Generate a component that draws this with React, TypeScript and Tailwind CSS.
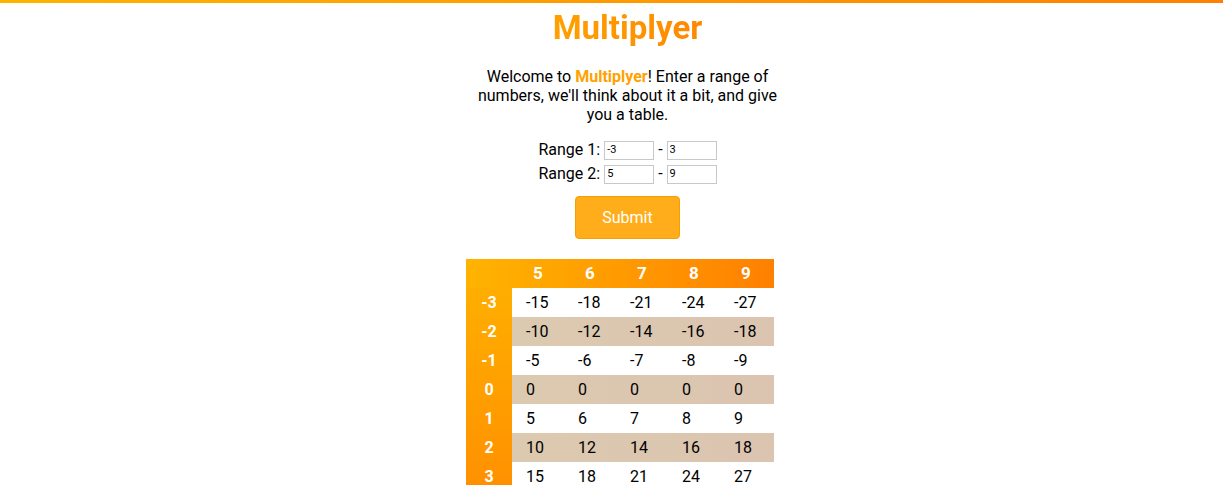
import { useState } from 'react';

const ROWS = [-3, -2, -1, 0, 1, 2, 3];
const COLS = [5, 6, 7, 8, 9];

function RangeRow({
  label,
  value,
  onChange,
}: {
  label: string;
  value: { from: string; to: string };
  onChange: (v: { from: string; to: string }) => void;
}) {
  return (
    <div className="flex items-center gap-1">
      <span>{label}</span>
      <input
        value={value.from}
        onChange={(e) => onChange({ ...value, from: e.target.value })}
        className="w-[50px] h-[19px] border border-[#c8c8c8] px-[2px] text-[11px] outline-none"
      />
      <span>-</span>
      <input
        value={value.to}
        onChange={(e) => onChange({ ...value, to: e.target.value })}
        className="w-[50px] h-[19px] border border-[#c8c8c8] px-[2px] text-[11px] outline-none"
      />
    </div>
  );
}

export default function App() {
  const [r1, setR1] = useState({ from: '-3', to: '3' });
  const [r2, setR2] = useState({ from: '5', to: '9' });

  return (
    <div className="min-h-screen bg-white text-black font-['Roboto',sans-serif]">
      <div className="h-[3px] bg-gradient-to-r from-[#ffb300] to-[#ff8000]" />

      <div className="flex flex-col items-center pl-[32px]">
        <h1 className="mt-[5px] text-[33px] leading-[40px] font-bold bg-gradient-to-r from-[#ffa000] to-[#ff8800] bg-clip-text text-transparent">
          Multiplyer
        </h1>

        <p className="mt-[19px] w-[310px] text-center text-base leading-[19px]">
          Welcome to <span className="font-bold text-[#ffa200]">Multiplyer</span>! Enter a range of numbers, we'll think about it a bit, and give you a table.
        </p>

        {/* Range inputs */}
        <div className="mt-[14px] flex flex-col items-center text-base leading-[24px]">
          <RangeRow label="Range 1:" value={r1} onChange={setR1} />
          <RangeRow label="Range 2:" value={r2} onChange={setR2} />
        </div>

        <button className="mt-[10px] w-[105px] h-[43px] rounded-[4px] bg-[#ffad1a] border border-[#f5a000] text-white text-base">
          Submit
        </button>

        {/* Table */}
        <div className="mt-[20px] mr-[15px] w-[308px]">
          <div className="flex h-[29px] items-center text-white font-bold text-[17px] bg-gradient-to-r from-[#ffb300] to-[#ff8000]">
            <div className="w-[46px]" />
            {COLS.map((c) => (
              <div key={c} className="w-[52px] text-center">{c}</div>
            ))}
          </div>
          <div className="flex">
            <div className="w-[46px] flex flex-col bg-gradient-to-b from-[#ffae00] to-[#ff9000] text-white font-bold">
              {ROWS.map((r) => (
                <div key={r} className="h-[29px] flex items-center justify-center">{r}</div>
              ))}
            </div>
            <div className="flex-1 flex flex-col">
              {ROWS.map((r, i) => (
                <div
                  key={r}
                  className={`flex h-[29px] ${i % 2 === 1 ? 'bg-gradient-to-r from-[#dccab0] to-[#dbc4b0]' : 'bg-white'}`}
                >
                  {COLS.map((c) => (
                    <div key={c} className="w-[52px] flex items-center pl-[14px]">{r * c}</div>
                  ))}
                </div>
              ))}
            </div>
          </div>
        </div>
      </div>
    </div>
  );
}
